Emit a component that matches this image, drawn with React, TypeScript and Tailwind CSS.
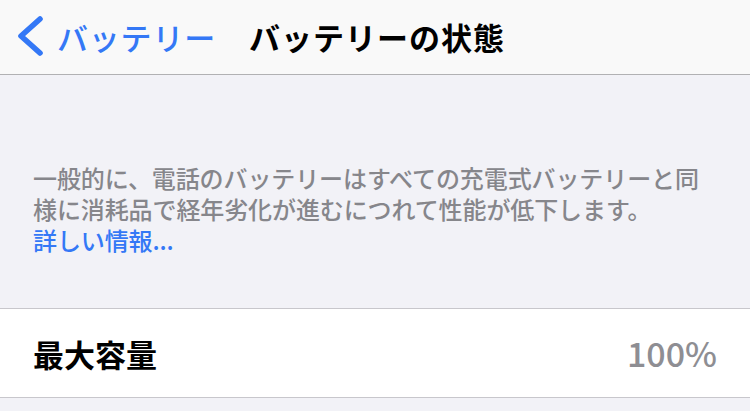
import React from "react";

export default function App() {
  const font = { fontFamily: '"Noto Sans CJK JP", "Noto Sans", sans-serif' };
  return (
    <div className="w-[750px] h-[411px] bg-[#f2f2f7] overflow-hidden" style={font}>
      <div className="h-[75px] bg-[#f9f9f9] border-b border-[#b1b1b3] flex items-center">
        <div className="flex items-center pl-[15px] -mt-[2px]">
          <svg width="30" height="40" viewBox="0 0 30 40" className="shrink-0">
            <path d="M25 3 L6 20 L25 37" fill="none" stroke="#3478f6" strokeWidth="5.6" strokeLinecap="round" strokeLinejoin="round" />
          </svg>
          <span className="ml-[12px] text-[31px] leading-none text-[#3478f6] font-medium tracking-[0.8px]">バッテリー</span>
          <span className="ml-[33px] text-[31px] leading-none text-black font-bold tracking-[1px]">バッテリーの状態</span>
        </div>
      </div>
      <div className="h-[233px] pt-[87px] px-[33px]">
        <p className="text-[24px] leading-[31px] text-[#86868b] font-medium tracking-[-0.1px]">
          一般的に、電話のバッテリーはすべての充電式バッテリーと同様に消耗品で経年劣化が進むにつれて性能が低下します。
          <br />
          <span className="text-[#3478f6]">詳しい情報...</span>
        </p>
      </div>
      <div className="h-[90px] bg-white border-y border-[#c8c7cc] flex items-center justify-between pl-[33px] pr-[33px]">
        <span className="text-[31px] leading-none text-black font-bold">最大容量</span>
        <span className="text-[34px] leading-none text-[#8e8e93] font-medium">100%</span>
      </div>
    </div>
  );
}
